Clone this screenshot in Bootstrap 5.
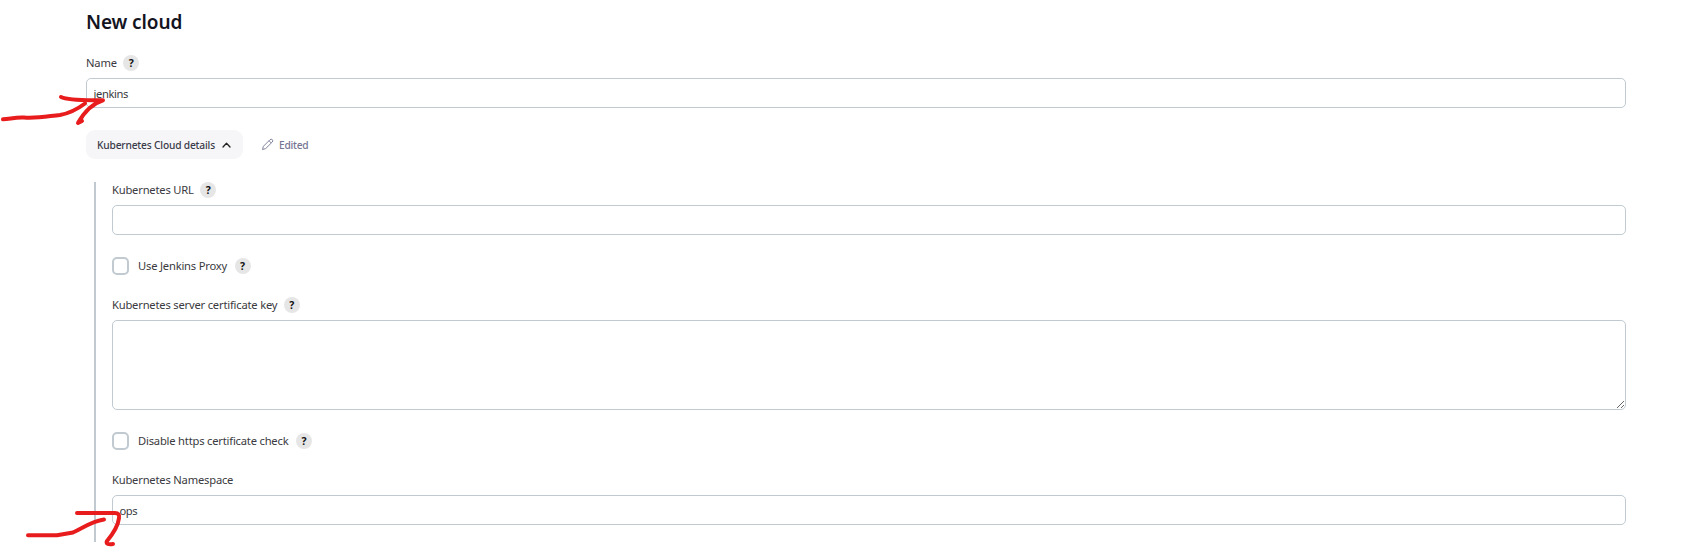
<!DOCTYPE html>
<html lang="en">
<head>
<meta charset="utf-8">
<title>New cloud</title>
<link href="https://cdn.jsdelivr.net/npm/bootstrap@5.3.0/dist/css/bootstrap.min.css" rel="stylesheet">
<style>
body{font-family:"Noto Sans","Open Sans",sans-serif;font-size:11.2px;letter-spacing:-.2px;line-height:16px;color:#3a3a40;background:#fff;overflow:hidden}
.page{margin-left:86px;width:1540px;padding-top:11px}
.page h1{font-size:19px;line-height:22px;font-weight:600;color:#14141f;letter-spacing:-.1px}
.first-field{margin-top:22px}
.fieldname{height:16px;margin-bottom:7px;gap:6.5px}
.fieldname span{white-space:nowrap}
.help{width:16px;height:16px;background:#e6e6e6;color:#111;font-size:10.5px;font-weight:700;line-height:16px;letter-spacing:0;text-align:center;flex:none}
.page .form-control{border:1px solid #c0cad0;border-radius:5px;font-size:11.2px;letter-spacing:-.4px;line-height:16px;height:30px;padding:6px 6.5px;color:#3a3a40;box-shadow:none}
.page textarea.form-control{height:90px;resize:vertical}
.page .form-check-input{width:17px;height:18px;border:2px solid #c0cad0;border-radius:5px;flex:none}
.checkrow{margin-top:22px;height:18px}
.checkrow span{margin:0 7.5px 0 9px}
.group{margin-top:22px}
.toggle{width:157px;height:29px;background:#f6f6f9;border-radius:9px;font-size:10.2px;letter-spacing:-.17px;font-weight:500;line-height:16px;padding:0 12px 0 11px;color:#3a3a48;border:0;white-space:nowrap}
.edited{color:#757592;font-size:10.2px;font-weight:500;letter-spacing:-.25px;margin-left:18px;gap:5px}
.details{margin-left:8px;border-left:2px solid #c0cad0;padding-left:16px;height:360px;margin-top:23px}
.marks{left:0;top:0;pointer-events:none}
</style>
</head>
<body>
<main class="page">
  <h1 class="mb-0">New cloud</h1>
  <div class="first-field">
    <label class="fieldname d-flex align-items-center"><span>Name</span><b class="help rounded-circle">?</b></label>
    <input class="form-control" value="jenkins">
  </div>
  <div class="group d-flex align-items-center">
    <button class="toggle btn d-flex align-items-center justify-content-between"><span>Kubernetes Cloud details</span>
      <svg width="9" height="6" viewBox="0 0 9 6" fill="none" stroke="#222" stroke-width="1.3" stroke-linecap="round" stroke-linejoin="round"><path d="M1 5 4.500 1.300 8 5"/></svg></button>
    <div class="edited d-flex align-items-center">
      <svg width="13" height="13" viewBox="0 0 13 13" fill="none" stroke="#757592" stroke-width=".9" stroke-linejoin="round"><path d="M1.500 11.500 2.400 8.300 9 1.700Q10.300.7 11.300 1.700 12.300 2.800 11.300 4L4.700 10.600ZM8 2.700 10.300 5"/></svg>
      <span>Edited</span></div>
  </div>
  <section class="details">
    <div>
      <label class="fieldname d-flex align-items-center"><span>Kubernetes URL</span><b class="help rounded-circle">?</b></label>
      <input class="form-control">
    </div>
    <div class="checkrow d-flex align-items-center">
      <input type="checkbox" class="form-check-input m-0"><span>Use Jenkins Proxy</span><b class="help rounded-circle">?</b>
    </div>
    <div class="group">
      <label class="fieldname d-flex align-items-center"><span>Kubernetes server certificate key</span><b class="help rounded-circle">?</b></label>
      <textarea class="form-control"></textarea>
    </div>
    <div class="checkrow d-flex align-items-center">
      <input type="checkbox" class="form-check-input m-0"><span>Disable https certificate check</span><b class="help rounded-circle">?</b>
    </div>
    <div class="group">
      <label class="fieldname d-flex align-items-center"><span>Kubernetes Namespace</span></label>
      <input class="form-control" value="ops">
    </div>
  </section>
</main>
<svg class="marks position-absolute" width="150" height="547" viewBox="0 0 150 547" fill="none" stroke="#e81c1c" stroke-width="4" stroke-linecap="round" stroke-linejoin="round">
  <path d="M3 119.300C10 119 15 117 24 117.500C38 118.500 49 116 60 115C71 113 79 108 85 103.500"/>
  <path d="M61 97C69 101 88 100 103 100.300C91 104 83 114 78 123L82 121"/>
  <path d="M28 535.300H57L73 532.500C83 528 92 521 104 519.500"/>
  <path d="M77 513H115Q120 513 119 518C118 527 112 535 107 541Q105 545 113 544"/>
</svg>
<script src="https://cdn.jsdelivr.net/npm/bootstrap@5.3.0/dist/js/bootstrap.bundle.min.js"></script>
</body>
</html>
